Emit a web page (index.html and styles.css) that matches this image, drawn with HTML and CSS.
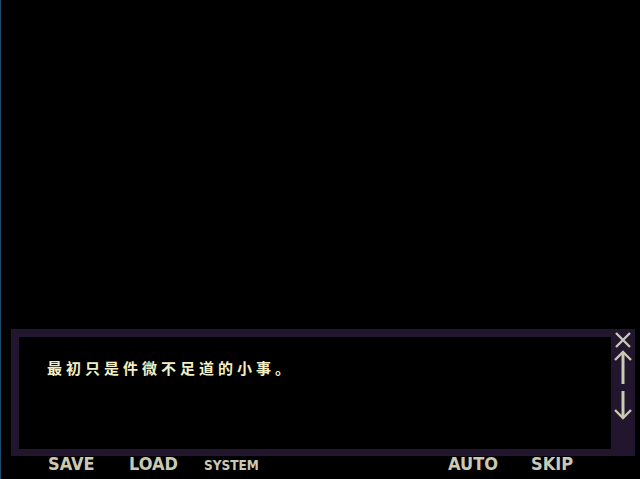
FILE: index.html
```html
<!DOCTYPE html>
<html lang="zh">
<head>
    <meta charset="UTF-8">
    <meta name="viewport" content="width=device-width, initial-scale=1.0">
    <title>最初只是件微不足道的小事</title>
    <link rel="stylesheet" href="styles.css">
</head>
<body>
    <div class="screen">
        <div class="stage"></div>

        <div class="msg-window">
            <div class="msg-body">
                <p class="msg-text">最初只是件微不足道的小事。</p>
            </div>
            <div class="msg-side">
                <!-- close -->
                <svg class="side-icon" width="18" height="16" viewBox="0 0 18 16">
                    <path d="M2 1 L16 15 M16 1 L2 15" stroke="#c9c9b4" stroke-width="2.4" fill="none"/>
                </svg>
                <!-- scroll up -->
                <svg class="side-icon up" width="18" height="36" viewBox="0 0 18 36">
                    <path d="M9 2 V34" stroke="#c9c9b4" stroke-width="3" fill="none"/>
                    <path d="M1 10 L9 2 L17 10" stroke="#c9c9b4" stroke-width="2.4" fill="none"/>
                </svg>
                <!-- scroll down -->
                <svg class="side-icon down" width="18" height="30" viewBox="0 0 18 30">
                    <path d="M9 0 V27" stroke="#c9c9b4" stroke-width="3" fill="none"/>
                    <path d="M1 19 L9 27 L17 19" stroke="#c9c9b4" stroke-width="2.4" fill="none"/>
                </svg>
            </div>
        </div>

        <div class="menu-bar">
            <span class="menu-btn">SAVE</span>
            <span class="menu-btn">LOAD</span>
            <span class="menu-btn small">SYSTEM</span>
            <span class="menu-btn">AUTO</span>
            <span class="menu-btn">SKIP</span>
        </div>
    </div>
</body>
</html>
```

FILE: styles.css
```css
html, body {
    margin: 0;
    padding: 0;
    background: #000;
}
.screen {
    width: 639px;
    height: 479px;
    border-left: 1px solid #1b4a6b;
    display: flex;
    flex-direction: column;
    overflow: hidden;
}
.stage {
    height: 329px;
    flex-shrink: 0;
}
.msg-window {
    margin-left: 10px;
    width: 624px;
    height: 127px;
    flex-shrink: 0;
    background: #22152e;
    display: flex;
}
.msg-body {
    flex: 1;
    background: #000;
    margin: 8px 0 7px 8px;
    padding: 21px 0 0 28px;
}
.msg-text {
    margin: 0;
    font-family: "Noto Sans CJK SC", sans-serif;
    font-weight: bold;
    font-size: 15px;
    line-height: 20px;
    letter-spacing: 4px;
    color: #f3efc3;
}
.msg-side {
    width: 24px;
    display: flex;
    flex-direction: column;
    align-items: center;
    padding-top: 3px;
}
.side-icon {
    display: block;
}
.side-icon.up {
    margin-top: 2px;
}
.side-icon.down {
    margin-top: 5px;
}
.menu-bar {
    display: grid;
    grid-template-columns: 81px 75px 244px 83px auto;
    padding-left: 47px;
    align-items: baseline;
}
.menu-btn {
    font-family: "DejaVu Sans Condensed", sans-serif;
    font-weight: bold;
    font-size: 18px;
    line-height: 16px;
    color: #c9c9b4;
}
.menu-btn.small {
    font-size: 13.5px;
}
```
